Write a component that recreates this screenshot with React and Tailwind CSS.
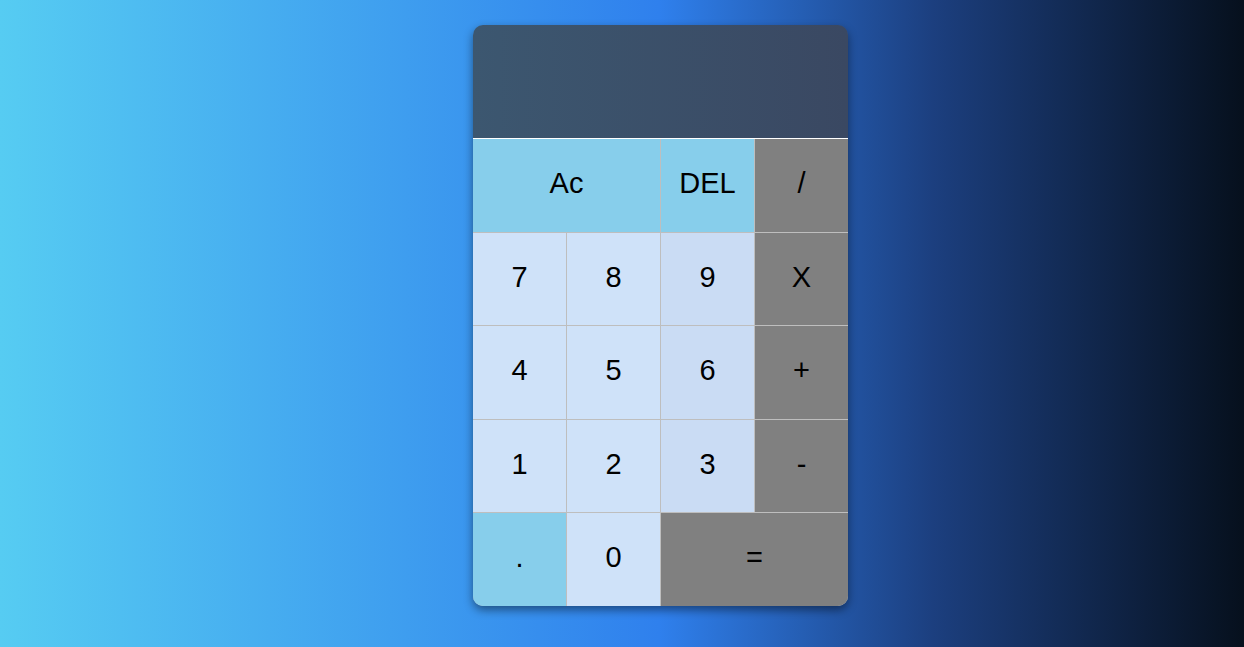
import React from 'react';

const NUM = 'bg-[#cfe2f9]';
const NUM3 = 'bg-[#cadcf4]';
const OP = 'bg-[#808080]';
const SKY = 'bg-[#87ceeb]';

const rows = [
  [
    { label: 'Ac', cls: SKY, span: 'col-span-2' },
    { label: 'DEL', cls: SKY },
    { label: '/', cls: OP },
  ],
  [
    { label: '7', cls: NUM },
    { label: '8', cls: NUM },
    { label: '9', cls: NUM3 },
    { label: 'X', cls: OP },
  ],
  [
    { label: '4', cls: NUM },
    { label: '5', cls: NUM },
    { label: '6', cls: NUM3 },
    { label: '+', cls: OP },
  ],
  [
    { label: '1', cls: NUM },
    { label: '2', cls: NUM },
    { label: '3', cls: NUM3 },
    { label: '-', cls: OP },
  ],
  [
    { label: '.', cls: SKY },
    { label: '0', cls: NUM },
    { label: '=', cls: OP, span: 'col-span-2' },
  ],
];

export default function App() {
  return (
    <div className="min-h-[647px] w-full flex justify-center pl-[77px] bg-[linear-gradient(to_right,#56ccf2_0%,#2f80ed_53%,#1c3f7f_75%,#06101d_100%)] font-['Liberation_Sans',Arial,sans-serif]">
      <div className="mt-[25px] w-[375px] h-[581px] rounded-[10px] overflow-hidden shadow-[0_4px_10px_rgba(0,0,0,0.45)] flex flex-col">
        {/* display */}
        <div className="h-[113px] bg-[linear-gradient(to_right,#3c5770,#3a4862)]" />

        {/* keys */}
        <div className="flex-1 grid grid-cols-4 grid-rows-5 gap-px bg-[#bebebe] border-t border-white">
          {rows.flat().map((k, i) => (
            <button
              key={i}
              className={`${k.cls} ${k.span || ''} pb-[3px] text-[29px] text-black flex items-center justify-center`}
            >
              {k.label}
            </button>
          ))}
        </div>
      </div>
    </div>
  );
}
